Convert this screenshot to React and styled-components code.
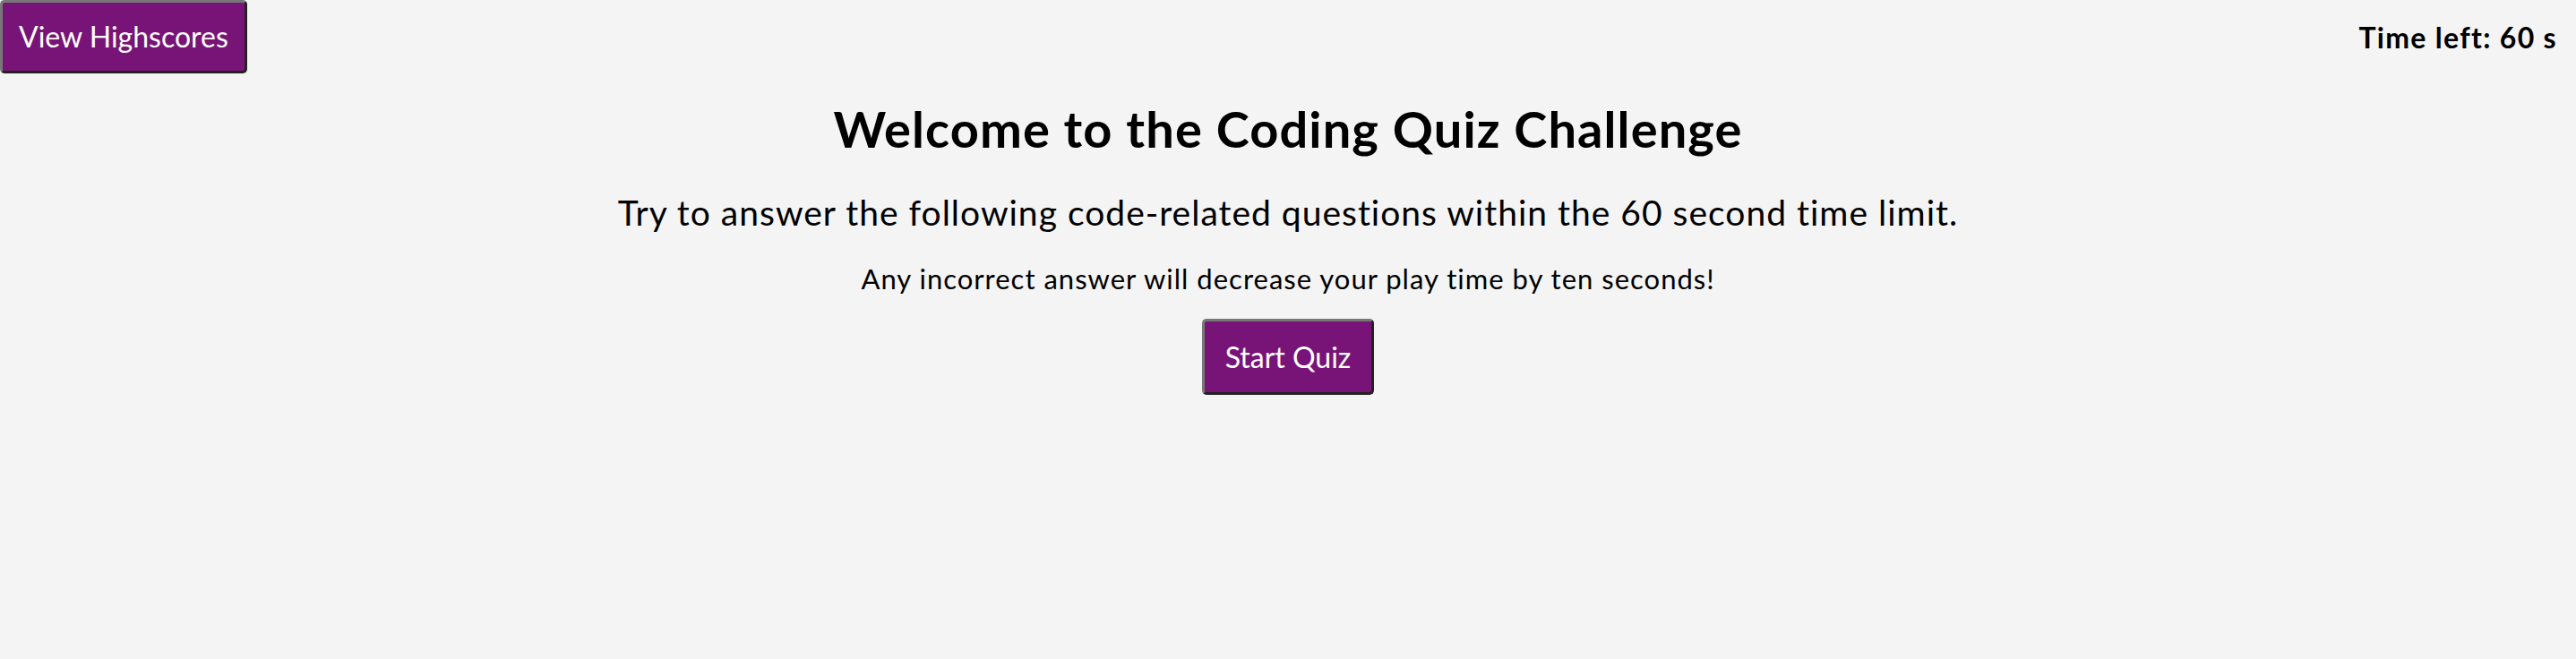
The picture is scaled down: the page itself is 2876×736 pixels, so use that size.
import styled, { createGlobalStyle } from 'styled-components'

const GlobalStyle=createGlobalStyle`
    body{
        margin:0;
        background:#f4f4f4;
        font-family:"Trebuchet MS", Lato, "DejaVu Sans", sans-serif;
        color:#000;
    }
`;

const Header=styled.header`
    display:flex;
    justify-content:space-between;
    align-items:center;
`;

const Button=styled.button`
    font-family:inherit;
    font-size:32px;
    line-height:${props => props.$tall ? '41px' : '38px'};
    padding:19px ${props => props.$wide ? '23px' : '18px'};
    color:#fff;
    background:#781478;
    border:3px solid;
    border-color:#777 #222 #222 #777;
    border-radius:5px;
    cursor:pointer;
`;

const Timer=styled.p`
    margin:0;
    padding-right:21px;
    font-size:32px;
    font-weight:bold;
    letter-spacing:1.3px;
`;

const Main=styled.main`
    display:flex;
    flex-direction:column;
    align-items:center;
    text-align:center;
`;

const Title=styled.h1`
    margin:30px 0 0;
    font-size:56px;
    line-height:64px;
    font-weight:bold;
    letter-spacing:1.1px;
`;

const Lead=styled.p`
    margin:38px 0 0;
    font-size:39px;
    line-height:46px;
    letter-spacing:1px;
`;

const Note=styled.p`
    margin:33px 0 27px;
    font-size:31px;
    line-height:36px;
    letter-spacing:1px;
`;

function App(){
    return (
        <>
        <GlobalStyle/>
        <Header>
            <Button type="button">View Highscores</Button>
            <Timer>Time left: 60 s</Timer>
        </Header>
        <Main>
            <Title>Welcome to the Coding Quiz Challenge</Title>
            <Lead>Try to answer the following code-related questions within the 60 second time limit.</Lead>
            <Note>Any incorrect answer will decrease your play time by ten seconds!</Note>
            <Button type="button" $tall $wide>Start Quiz</Button>
        </Main>
        </>
    )
}

export default App;
